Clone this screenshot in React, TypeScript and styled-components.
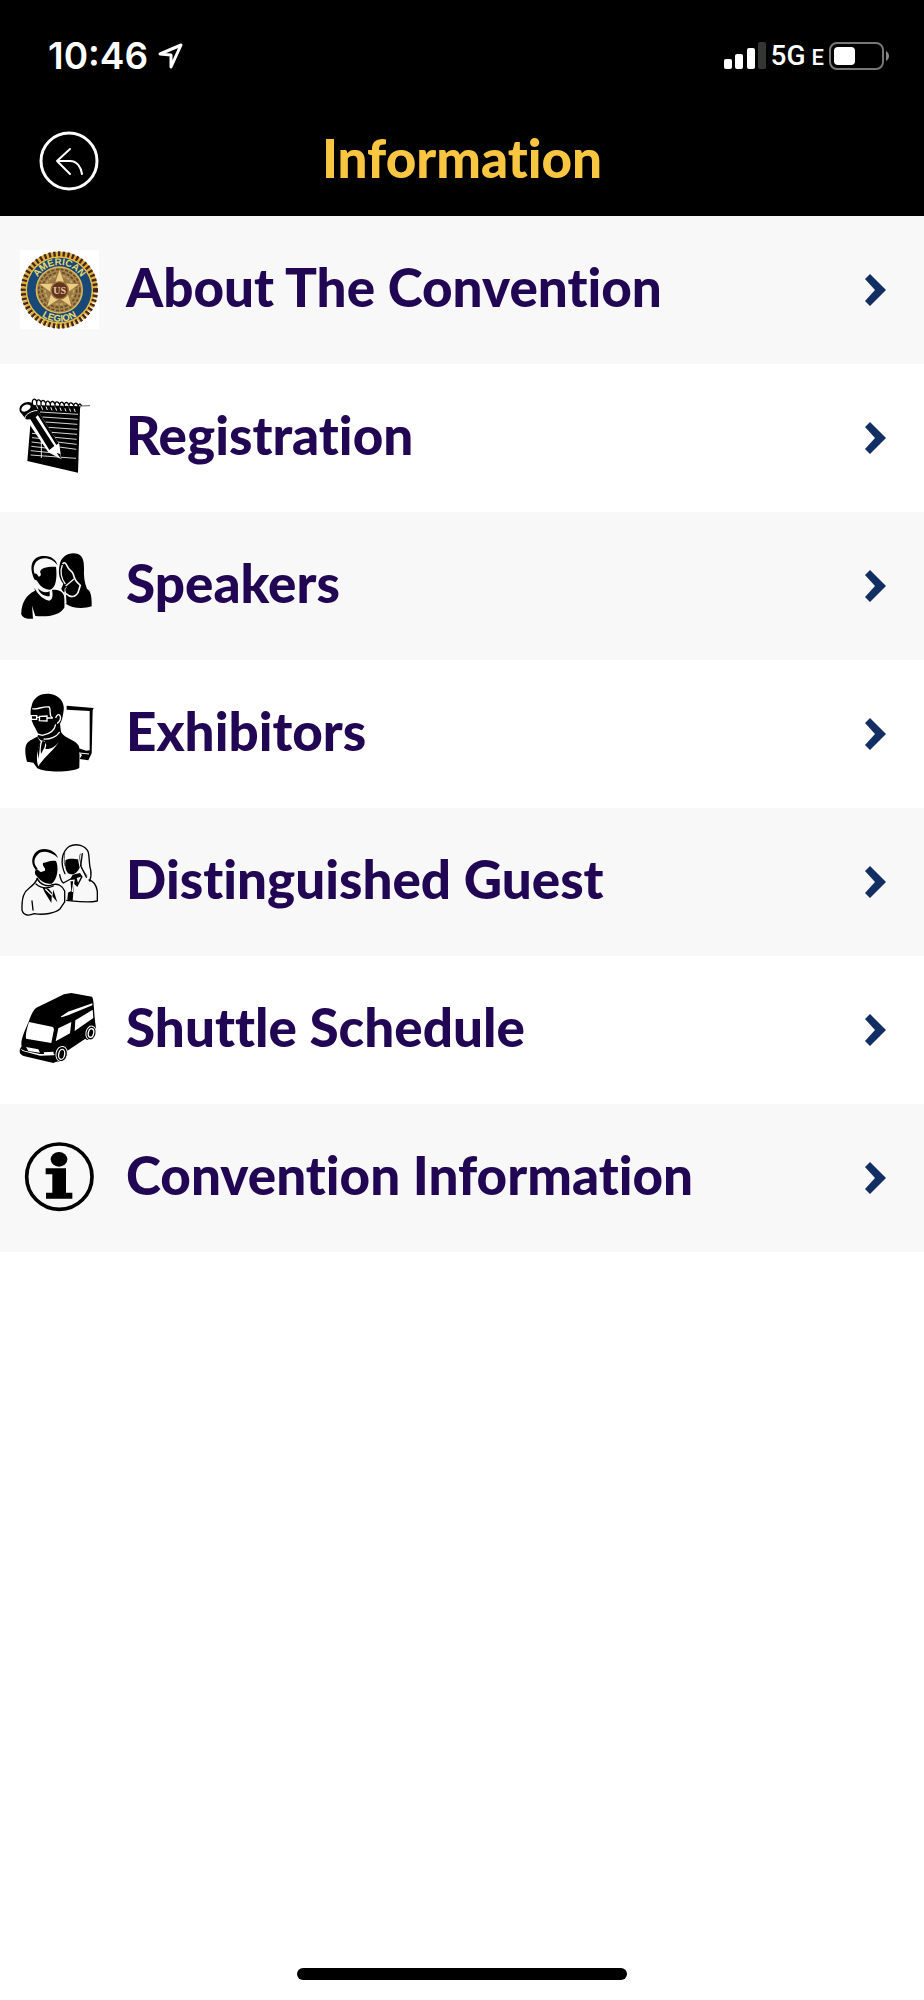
import React from 'react';
import styled, { createGlobalStyle, css } from 'styled-components';

const GlobalStyle = createGlobalStyle`
  *, *::before, *::after { box-sizing: border-box; }
  body { margin: 0; background: #fff; }
`;

const Screen = styled.div`
  display: flex;
  flex-direction: column;
  min-height: 100vh;
  background: #fff;
  font-family: Lato, 'Open Sans', sans-serif;
  font-variant-ligatures: none;
`;

const Header = styled.header`
  background: #000;
  color: #fff;
`;

const StatusBar = styled.div`
  display: flex;
  align-items: center;
  justify-content: space-between;
  height: 106px;
  padding: 6px 34px 0 48px;
`;

const StatusGroup = styled.div<{ $gap: number }>`
  display: flex;
  align-items: center;
  gap: ${({ $gap }) => $gap}px;
`;

const Time = styled.time`
  font: 600 37px/44px Inter, sans-serif;
`;

const Network = styled.span`
  padding-top: 2px;
  font: 500 28px/36px Roboto, sans-serif;
`;

const NetworkSuffix = styled.small`
  margin-left: 6px;
  font-size: 22px;
`;

const NavBar = styled.nav`
  display: grid;
  grid-template-columns: 60px 1fr 60px;
  align-items: center;
  height: 110px;
  padding: 0 39px;
`;

const BackButton = styled.button`
  display: block;
  width: 60px;
  height: 60px;
  padding: 0;
  border: 0;
  background: none;
  color: inherit;
  cursor: pointer;
`;

const heavyText = css`
  padding-bottom: 6px;
  font-size: 53px;
  font-weight: 900;
  line-height: 60px;
`;

const Title = styled.h1`
  ${heavyText}
  margin: 0;
  color: #f9c642;
  text-align: center;
`;

const Menu = styled.ul`
  flex: 1;
  margin: 0;
  padding: 0;
  list-style: none;
`;

const MenuItem = styled.li`
  &:nth-child(odd) { background: #f8f8f8; }
`;

const MenuLink = styled.a`
  display: flex;
  align-items: center;
  gap: 16px;
  height: 148px;
  padding: 0 38px 0 10px;
  color: #210653;
  text-decoration: none;
`;

const Label = styled.span`
  ${heavyText}
  flex: 1;
`;

const Glyph = styled.svg`
  display: block;
  flex: none;
`;

const HomeIndicator = styled.div`
  width: 330px;
  height: 12px;
  margin: 0 auto 20px;
  border-radius: 6px;
  background: #000;
`;

const ItemIcon = ({ top = 0, children }: { top?: number; children: React.ReactNode }) => (
  <Glyph width="100" height="100" viewBox={`0 ${top} 300 300`} aria-hidden="true">
    {children}
  </Glyph>
);

const SealIcon = () => (
  <ItemIcon>
    <defs>
      <radialGradient id="bronze">
        <stop offset="0" stopColor="#8a6a3c" />
        <stop offset="1" stopColor="#a98a50" />
      </radialGradient>
      <path id="arcTop" d="M73 150A75 75 0 0 1 223 150" />
      <path id="arcBottom" d="M53 150A95 95 0 0 0 243 150" />
    </defs>
    <path fill="#fff" d="M30 30H267V268H30z" />
    <circle cx="148" cy="150" r="106" fill="#e0b13c" />
    <circle cx="148" cy="150" r="107" fill="none" stroke="#dfad36" strokeWidth="16" strokeDasharray="10 4" />
    <circle cx="148" cy="150" r="108" fill="none" stroke="#46271b" strokeWidth="16" strokeDasharray="7 7" />
    <circle cx="148" cy="150" r="101" fill="#e6be4c" />
    <circle cx="148" cy="150" r="97" fill="#174878" />
    <circle cx="148" cy="150" r="71" fill="#e1bb55" />
    <circle cx="148" cy="150" r="67" fill="url(#bronze)" />
    <g fill="none" stroke="#6d4927" strokeWidth="5" strokeDasharray="9 5">
      <circle cx="148" cy="150" r="62" />
      <circle cx="148" cy="150" r="52" />
      <circle cx="148" cy="150" r="43" stroke="#c5a665" />
    </g>
    <path fill="#ebce84" stroke="#8d6932" strokeWidth="2" d="M149 86L164 129L210 131L174 158L186 202L149 177L110 202L123 158L86 131L134 129z" />
    <circle cx="149" cy="151" r="26" fill="#63351f" stroke="#9b7044" strokeWidth="4" />
    <text x="149" y="162" textAnchor="middle" fontFamily="Liberation Serif, serif" fontSize="30" fontWeight="700" fill="#e3c9a0">US</text>
    <g fontFamily="Liberation Sans, sans-serif" fontSize="29" fontWeight="700" fill="#e8d96f">
      <text textAnchor="middle"><textPath href="#arcTop" startOffset="50%">AMERICAN</textPath></text>
      <text textAnchor="middle"><textPath href="#arcBottom" startOffset="50%">LEGION</textPath></text>
    </g>
  </ItemIcon>
);

const NotepadIcon = () => (
  <ItemIcon top={9}>
    <path d="M66 60L212 64L210 72L204 263L52 228z" />
    <g fill="none" stroke="#fff" strokeWidth="2.5">
      <path d="M90 81L204 88M98 96L203 103M107 111L202 118M116 127L202 133M125 142L201 148M134 157L200 163M142 171L200 178M148 186L199 193M66 145L87 147M66 158L96 161M65 171L106 176M64 184L116 190M62 197L142 205M62 210L198 220M94 163V219" />
    </g>
    <g fill="none">
      <path stroke="#fff" strokeWidth="3" d="M78 58L84 73M92 59L98 74M106 60L112 75M120 61L126 76M134 62L140 77M148 63L154 78M162 64L168 79M176 65L182 80M190 66L196 81" />
      <path stroke="#000" strokeWidth="4" d="M68 60C64 42 74 37 80 49M81 62C77 44 87 39 93 51M94 64C90 46 100 41 106 53M108 66C104 48 114 43 120 55M122 67C118 49 128 44 134 56M136 68C132 50 142 45 148 57M150 69C146 51 156 46 162 58M164 70C160 52 170 47 176 59M178 71C174 53 184 48 190 60M192 72C188 54 198 49 204 61M205 74C202 57 212 52 214 63" />
      <path stroke="#000" strokeWidth="2" d="M212 63L240 62" />
    </g>
    <path fill="#fff" d="M42 99L83 77L148 178L154 223L115 202L49 104z" />
    <path d="M60 101L75 94L133 183L118 195zM81 86L87 83L146 175L139 180zM140 204L151 207L153 222z" />
    <path d="M30 80C22 62 45 46 65 53L86 75C91 92 70 105 48 103z" />
    <path fill="#fff" d="M34 75C34 62 51 55 60 61C67 67 54 79 43 80C37 80 35 79 34 75z" />
    <path fill="none" stroke="#fff" strokeWidth="3" d="M45 99C45 87 71 75 82 77" />
  </ItemIcon>
);

const SpeakersIcon = () => (
  <ItemIcon top={3}>
    <path d="M75 136C52 91 69 61 104 63C125 63 138 75 143 91C126 68 97 63 80 79C68 92 68 112 81 129z" />
    <path d="M90 111C94 99 102 95 138 95C142 127 138 160 120 164C100 163 88 150 81 137C73 133 66 120 73 116C80 114 84 122 86 125C94 124 94 116 90 111z" />
    <path d="M75 167L73 158C85 181 103 195 118 197C129 194 129 178 126 165C149 161 162 173 164 191L163 218C149 240 116 247 76 243L66 212L69 251C45 254 31 244 34 231C36 204 47 180 75 167z" />
    <path fill="#f8f8f8" d="M79 153C86 178 99 185 121 190L119 165C104 166 89 160 79 153z" />
    <path d="M84 160C95 172 108 175 119 169L119 184C102 184 89 177 84 160z" />
    <path d="M149 91C151 64 180 49 204 57C220 64 222 81 222 100C221 122 223 143 231 162C241 167 246 181 245 214C217 223 184 219 167 206L164 174C157 168 151 162 156 157L160 146C147 132 144 112 149 91z" />
    <g fill="none" stroke="#f8f8f8">
      <path strokeWidth="4" d="M157 90C149 109 154 132 166 147M167 153L192 132" />
      <path strokeWidth="5" d="M158 87C164 77 170 89 174 98C179 107 188 108 190 118C193 133 201 143 211 151L204 173C194 189 180 187 168 176M165 170L167 206" />
      <path strokeWidth="3" d="M169 157C163 162 164 169 169 177" />
    </g>
  </ItemIcon>
);

const ExhibitorsIcon = () => (
  <ItemIcon top={3}>
    <path d="M77 137C62 116 58 87 65 68C70 43 92 29 122 33C151 38 164 60 161 82C159 100 155 116 150 122L153 147C164 167 199 171 207 190C210 209 208 237 208 254C190 268 109 270 82 256L70 239L51 236C46 218 44 198 48 187C52 174 68 168 82 161L85 154z" />
    <path d="M170 68L251 75L248 82L245 211L235 232L209 228L216 216L206 207V196L229 203L239 202V84L170 80z" />
    <path fill="#fff" d="M82 158C88 171 94 174 103 173L109 187L106 198C121 200 136 191 146 177C133 201 103 221 85 250C77 232 81 197 92 176C88 171 83 165 82 158z" />
    <path d="M98 173L106 178L104 192L93 213C91 199 93 183 98 173zM82 201L91 177L86 228z" />
    <g fill="none" stroke="#fff" strokeWidth="4">
      <path d="M67 77C82 81 97 69 118 72C125 86 114 97 128 105" />
      <path d="M63 98H80V109H65zM89 100L111 99V114L88 113zM80 103H90M111 105H128" />
      <path d="M137 105C140 94 147 93 150 98C155 107 147 119 141 121M137 124C134 143 119 153 97 157L82 153M101 168C118 170 140 162 149 147" />
      <path d="M208 210L237 213" strokeWidth="3" />
    </g>
  </ItemIcon>
);

const GuestsIcon = () => (
  <ItemIcon>
    <path d="M77 114C59 91 66 65 87 54C113 45 139 60 144 78C126 60 98 53 84 67C70 80 70 96 83 110z" />
    <path d="M99 93C111 92 121 83 138 87C147 105 143 143 125 155C104 158 89 144 80 132C73 128 73 116 80 112C86 113 89 121 93 120L105 116C108 106 96 104 99 93z" />
    <path d="M167 84C181 77 197 82 204 82L209 107C200 126 187 130 174 124C165 112 164 97 167 84zM181 141L188 128L210 123L218 134L202 165L192 155L188 207L172 203L174 182L184 177z" />
    <path fill="#f8f8f8" d="M200 138L213 134L204 152z" />
    <g fill="none" stroke="#000" strokeWidth="4" strokeLinecap="round" strokeLinejoin="round">
      <path d="M82 140C76 153 72 158 58 168C42 179 35 194 36 235C42 253 58 251 73 245C104 250 135 243 149 232L163 211" />
      <path d="M81 139C91 158 111 166 128 158C144 153 159 163 164 177V211M78 156C93 169 109 172 130 162M66 207L69 234" />
      <path d="M149 128C152 145 157 151 160 153L182 141M165 125C151 96 153 61 178 43C198 33 227 39 235 61C239 80 237 101 242 113C244 126 243 137 239 147M217 65L212 101L229 136M237 144C253 148 260 164 262 178V207M170 205C198 208 234 214 261 207" />
      <path d="M211 66C204 78 215 96 215 109L231 132M164 62C163 71 161 90 165 101" strokeWidth="2" />
    </g>
    <path d="M97 165L116 170L126 182L124 213L104 181zM130 173L142 211L127 193z" />
    <path fill="none" stroke="#f8f8f8" strokeWidth="4" d="M106 171L126 190M180 146L192 145L187 180" />
  </ItemIcon>
);

const ShuttleIcon = () => (
  <ItemIcon>
    <path d="M79 83L162 43L184 39L246 50C253 59 251 103 258 145C260 165 250 179 239 180C231 181 228 178 226 176L171 213C168 236 158 246 146 245C139 244 136 248 130 249L44 229C30 225 26 217 31 205L35 199C30 181 46 148 56 125C63 105 69 91 79 83z" />
    <path fill="#fff" d="M57 126L129 141L132 148L124 189L48 176C46 160 52 142 57 126zM145 145L184 126L180 160L137 184zM196 121L248 89L250 114L194 153zM152 110L174 95L247 70V76L176 105L155 112zM48 201L85 208L90 218L55 213zM101 217L130 215L132 225L103 224z" />
    <g fill="#000" stroke="#fff">
      <ellipse cx="155" cy="222" rx="17" ry="23" strokeWidth="3" transform="rotate(10 155 222)" />
      <ellipse cx="243" cy="159" rx="15" ry="21" strokeWidth="3" transform="rotate(12 243 159)" />
      <ellipse cx="155" cy="223" rx="9" ry="15" strokeWidth="4" transform="rotate(10 155 223)" />
      <ellipse cx="243" cy="159" rx="8" ry="13" strokeWidth="4" transform="rotate(12 243 159)" />
    </g>
    <path fill="#fff" d="M31 206L44 212L90 222L134 222L132 226L90 227L38 213z" />
  </ItemIcon>
);

const InfoIcon = () => (
  <ItemIcon top={4}>
    <circle cx="148" cy="150" r="98" fill="none" stroke="#000" strokeWidth="11" />
    <ellipse cx="147" cy="98" rx="25" ry="22" />
    <path d="M107 125H168V198H187V216H108V198H127V143H107z" />
  </ItemIcon>
);

const Chevron = () => (
  <Glyph width="22" height="34" viewBox="0 0 22 34" fill="#132e62" aria-hidden="true">
    <path d="M6 1L22 17L6 33L1 28L11 17L1 6z" />
  </Glyph>
);

const items = [
  { label: 'About The Convention', href: '#about', Icon: SealIcon },
  { label: 'Registration', href: '#registration', Icon: NotepadIcon },
  { label: 'Speakers', href: '#speakers', Icon: SpeakersIcon },
  { label: 'Exhibitors', href: '#exhibitors', Icon: ExhibitorsIcon },
  { label: 'Distinguished Guest', href: '#guests', Icon: GuestsIcon },
  { label: 'Shuttle Schedule', href: '#shuttle', Icon: ShuttleIcon },
  { label: 'Convention Information', href: '#information', Icon: InfoIcon },
];

export default function App() {
  return (
    <Screen>
      <GlobalStyle />
      <Header>
        <StatusBar>
          <StatusGroup $gap={10}>
            <Time>10:46</Time>
            <Glyph width="25" height="26" viewBox="0 0 25 26" fill="none" stroke="#fff" strokeWidth="3" strokeLinejoin="round" aria-hidden="true">
              <path d="M2 11L23 2L13 24V12z" />
            </Glyph>
          </StatusGroup>
          <StatusGroup $gap={5}>
            <Glyph width="42" height="28" viewBox="0 0 42 28" fill="#fff" aria-hidden="true">
              <rect y="17" width="8" height="10" rx="2" />
              <rect x="11" y="12" width="8" height="15" rx="2" />
              <rect x="23" y="6" width="8" height="21" rx="2" />
              <rect x="34" y="0" width="8" height="27" rx="2" fill="#343634" />
            </Glyph>
            <Network>5G<NetworkSuffix>E</NetworkSuffix></Network>
            <Glyph width="61" height="28" viewBox="0 0 61 28" aria-hidden="true">
              <rect x="1" y="1" width="53" height="26" rx="7" fill="none" stroke="#777" strokeWidth="2" />
              <rect x="5" y="5" width="21" height="18" rx="4" fill="#fff" />
              <path d="M57 9C61 11 61 17 57 19z" fill="#888" />
            </Glyph>
          </StatusGroup>
        </StatusBar>
        <NavBar>
          <BackButton type="button" aria-label="Back">
            <Glyph width="60" height="60" viewBox="0 0 60 60" fill="none" stroke="#fff" strokeWidth="2" strokeLinecap="round" strokeLinejoin="round" aria-hidden="true">
              <circle cx="30" cy="30" r="28" strokeWidth="3" />
              <path d="M31 18L18 30L31 43M18 30H31C38 30 42 36 43 43" />
            </Glyph>
          </BackButton>
          <Title>Information</Title>
        </NavBar>
      </Header>
      <Menu>
        {items.map(({ label, href, Icon }) => (
          <MenuItem key={href}>
            <MenuLink href={href}>
              <Icon />
              <Label>{label}</Label>
              <Chevron />
            </MenuLink>
          </MenuItem>
        ))}
      </Menu>
      <HomeIndicator />
    </Screen>
  );
}
